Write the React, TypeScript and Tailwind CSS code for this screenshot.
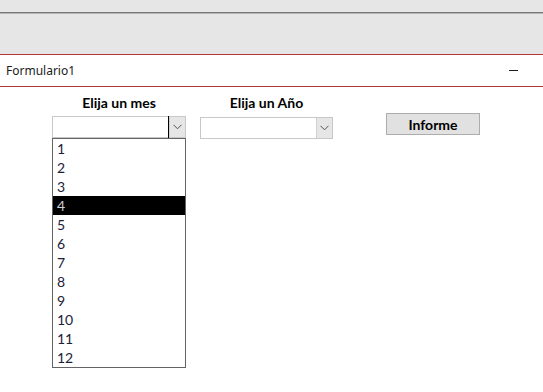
import React from "react";

const Chevron = () => (
  <svg width="9" height="6" viewBox="0 0 9 6" className="block">
    <path d="M0.5 0.8 L4.5 4.8 L8.5 0.8" fill="none" stroke="#505050" strokeWidth="1" />
  </svg>
);

const Combo = ({ caret }: { caret?: boolean }) => (
  <div className="flex h-[22px] w-full border border-[#c8c8c8] bg-white">
    <div className="flex-1 relative">
      {caret && <div className="absolute right-0 top-[-1px] h-[22px] w-[1px] bg-black" />}
    </div>
    <div className="flex w-[16px] items-center justify-center border-l border-[#d0d0d0] bg-[#e6e6e6]">
      <Chevron />
    </div>
  </div>
);

export default function App() {
  const months = ["1", "2", "3", "4", "5", "6", "7", "8", "9", "10", "11", "12"];
  return (
    <div
      className="flex h-[392px] w-[543px] flex-col bg-white"
      style={{ fontFamily: "Lato, 'Open Sans', sans-serif" }}
    >
      <div className="h-[12px] bg-[#e6e6e6]" />
      <div className="h-[1px] bg-[#7a7a7a]" />
      <div className="h-[1px] bg-[#b4b4b4]" />
      <div className="h-[40px] bg-[#e6e6e6]" />
      <div className="h-[1px] bg-[#b03a3a]" />
      <div className="flex h-[31px] items-center justify-between pl-[6px] pr-[25px]">
        <span className="text-[12px] text-[#1a1a1a]" style={{ fontFamily: "'Noto Sans', sans-serif" }}>
          Formulario1
        </span>
        <div className="h-[1px] w-[9px] bg-[#1a1a1a]" />
      </div>
      <div className="h-[1px] bg-[#b03a3a]" />
      <div className="flex pl-[52px] pt-[8px]">
        <div className="flex w-[134px] flex-col">
          <div className="h-[16px] text-center text-[14px] font-bold leading-[16px] text-black">Elija un mes</div>
          <div className="mt-[5px]">
            <Combo caret />
          </div>
          <div className="w-full border border-[#646464] bg-white">
            {months.map((m) => (
              <div
                key={m}
                className={`h-[19px] pl-[4px] text-[14px] leading-[19px] ${
                  m === "4" ? "bg-black text-[#c8d0dc]" : "text-[#1b2238]"
                }`}
              >
                {m}
              </div>
            ))}
          </div>
        </div>
        <div className="ml-[14px] flex w-[133px] flex-col">
          <div className="h-[16px] text-center text-[14px] font-bold leading-[16px] text-black">Elija un Año</div>
          <div className="mt-[6px]">
            <Combo />
          </div>
        </div>
        <div className="ml-[53px] mt-[18px] flex h-[22px] w-[94px] items-center justify-center border border-[#adadad] bg-[#e1e1e1] text-[14px] font-bold text-black">
          Informe
        </div>
      </div>
    </div>
  );
}
